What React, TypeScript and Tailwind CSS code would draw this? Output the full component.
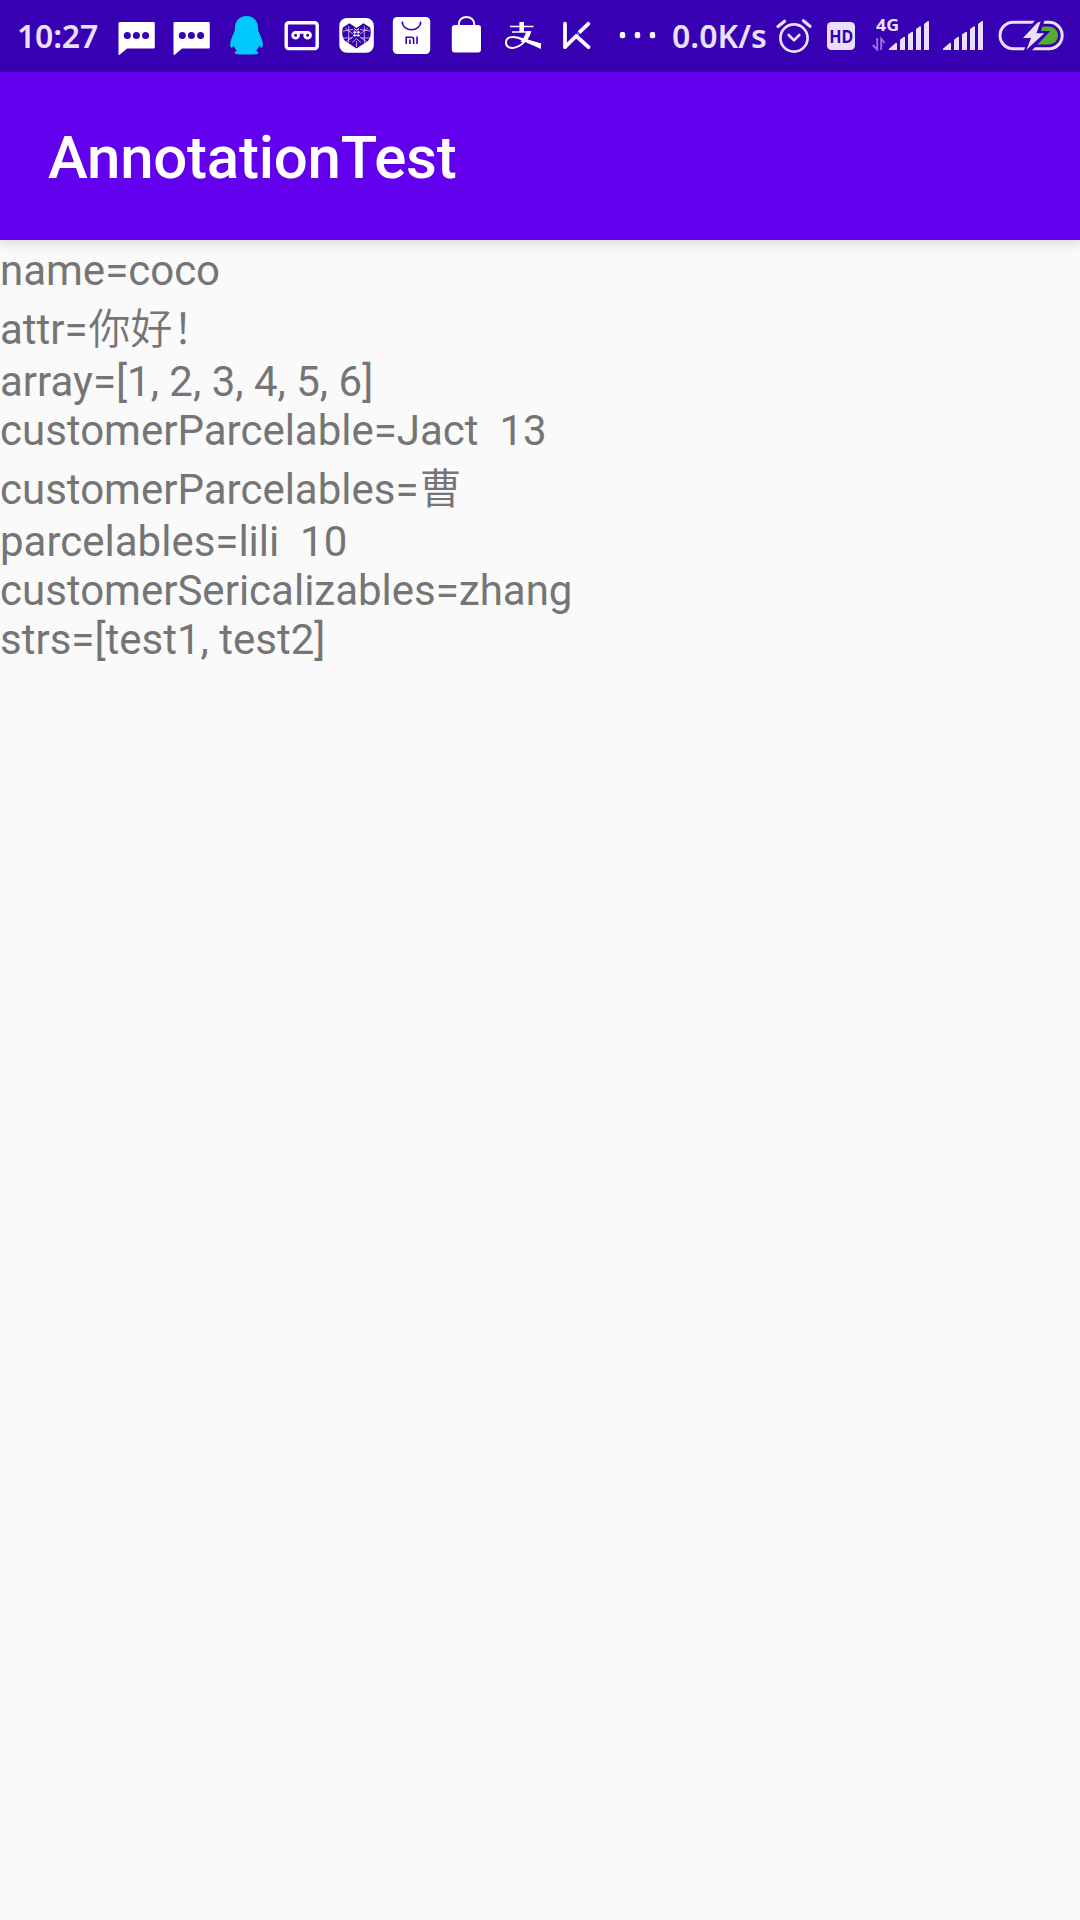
import React from "react";

const TINT = "#ebe0fc";
const BAR = "#3700b3";

function Slot({ x, w, children }: { x: number; w: number; children: React.ReactNode }) {
  return (
    <svg className="block shrink-0" width={w} height={72} viewBox={`${x} 0 ${w} 72`} fill="none">
      {children}
    </svg>
  );
}

function Chat({ x }: { x: number }) {
  return (
    <Slot x={x} w={55}>
      <g transform={`translate(${x - 109} 0)`}>
        <path d="M120 22H153.5Q154.8 22 154.8 23.3V47.2Q154.8 48.5 153.5 48.5H127L120 54.6Q118.5 55.4 118.5 54V23.3Q118.5 22 120 22Z" fill="#fff" />
        <g fill={BAR}>
          <circle cx="127.3" cy="35.5" r="3.5" />
          <circle cx="136.4" cy="35.5" r="3.5" />
          <circle cx="145.6" cy="35.5" r="3.5" />
        </g>
      </g>
    </Slot>
  );
}

function Bars({ x }: { x: number }) {
  return (
    <path
      transform={`translate(${x} 0)`}
      fill={TINT}
      d="M0 50V48.8L6 43.5Q8 42 8 44V50ZM11 50V39.8L14.6 37Q16 36.2 16 38V50ZM19 50V34.6L22.6 32Q24 31.2 24 33V50ZM27 50V29L30.6 26.4Q32 25.6 32 27.4V50ZM35 50V24L38.6 21.2Q40 20.4 40 22V50Z"
    />
  );
}

function StatusBar() {
  return (
    <header className="flex h-[72px] items-center bg-[#3700b3] font-['Noto_Sans',sans-serif] text-[32px] leading-[72px] font-semibold text-[#ebe0fc]">
      <span className="w-[109px] shrink-0 pl-[17px] tracking-[-0.2px] whitespace-nowrap">10:27</span>
      <Chat x={109} />
      <Chat x={164} />
      <Slot x={219} w={55}>
        <path
          fill="#00c8ff"
          d="M246.5 16C253.6 16 258 21 258 27.5C258 31 259.2 33 260.5 36C262.5 40.5 263.5 45 262.4 47.3C261.6 48.4 260 46.6 259.2 45.2C258.6 47.6 257.4 49.4 256 50.7C258 51.6 258.6 52.4 258.2 53.3C257.8 54.4 256 54.4 253.5 54.4H239.5C237 54.4 235.2 54.4 234.8 53.3C234.4 52.4 235 51.6 237 50.7C235.6 49.4 234.4 47.6 233.8 45.2C233 46.6 231.4 48.4 230.6 47.3C229.5 45 230.5 40.5 232.5 36C233.8 33 235 31 235 27.5C235 21 239.4 16 246.5 16Z"
        />
      </Slot>
      <Slot x={274} w={55}>
        <rect x="286.2" y="22.8" width="31" height="25.8" rx="2.5" stroke="#fff" strokeWidth="3.4" />
        <circle cx="295.6" cy="35.3" r="2.9" stroke="#fff" strokeWidth="2.8" />
        <circle cx="307.6" cy="35.3" r="2.9" stroke="#fff" strokeWidth="2.8" />
        <path d="M295.6 32.4H307.6" stroke="#fff" strokeWidth="2.8" />
      </Slot>
      <Slot x={329} w={55}>
        <rect x="339.3" y="18" width="34.5" height="34.7" rx="7.5" fill="#fff" />
        <path
          d="M356.5 48.5L345 41C342.6 38 342 35 342.3 31L342.8 27.5L349.5 23.2L356.5 28L363.5 23.2L370.2 27.5L370.7 31C371 35 370.4 38 368 41Z"
          fill={BAR}
        />
        <g stroke="#fff" strokeOpacity="0.8" strokeWidth="0.8">
          <path d="M348.7 26V43M364.3 26V43M343 31L353 29.5M370 31L360 29.5M343 38H352M370 38H361M345 28L353 34M368 28L360 34M353 37L346 42M360 37L367 42" />
          <path d="M352 42.5L356.5 38.8L361 42.5M356.5 41V47" />
        </g>
        <g stroke="#fff" strokeWidth="1">
          <path d="M354.8 30.5V37M358.2 30.5V37M353 32.2H360M353 35.4H360" />
          <path d="M354 28.5L356.5 30.2L359 28.5" />
        </g>
      </Slot>
      <Slot x={384} w={55}>
        <rect x="392.8" y="17" width="37.4" height="37" rx="4.5" fill="#fff" />
        <path d="M402.3 21.5C402.3 32.4 420.7 32.4 420.7 21.5" stroke={BAR} strokeWidth="1.5" />
        <path d="M406.2 44V37.2H411.5Q413.6 37.2 413.6 39.2V44M409.9 39.4V44M417 36.4V44" stroke={BAR} strokeWidth="1.6" />
      </Slot>
      <Slot x={439} w={55}>
        <rect x="451.8" y="25" width="29.2" height="27.6" rx="3" fill="#fff" />
        <path d="M458.8 26V24.5C458.8 14.4 474.2 14.4 474.2 24.5V26" stroke="#fff" strokeWidth="2" />
      </Slot>
      <Slot x={494} w={56}>
        <path d="M510 26.5H533.5M512 32H529.5" stroke="#fff" strokeWidth="1.7" />
        <path d="M521.7 22V32" stroke="#fff" strokeWidth="4.6" />
        <path d="M530.5 31.2C528.5 37.5 524 43 519 46C514 49 506 48.8 506 42.5C506 37 512 36 518 37.7C525 39.7 530 41.5 541 44.5" stroke="#fff" strokeWidth="2" />
        <path d="M526.4 31.2H531C529.5 36 527 40 523.5 43L520.5 41.5C523.5 38.4 525.3 35 526.4 31.2ZM518 37.2C524 38.8 529 40.2 541 43.5V49C535 46 526 42.6 518 38.8Z" fill="#fff" />
      </Slot>
      <Slot x={550} w={56}>
        <path d="M565 23.7V47.2L576.2 36L588.5 47.2M588.3 23.8L579 32.7" stroke="#fff" strokeWidth="3.8" strokeLinecap="round" strokeLinejoin="round" />
        <path d="M576.3 30.9L581.2 35.6" stroke={BAR} strokeWidth="1.2" />
      </Slot>
      <Slot x={606} w={66}>
        <g fill="#fff">
          <rect x="619.8" y="32" width="5.4" height="6.2" rx="2" />
          <rect x="634.8" y="32" width="5.4" height="6.2" rx="2" />
          <rect x="649.8" y="32" width="5.4" height="6.2" rx="2" />
        </g>
      </Slot>
      <span className="w-[98px] shrink-0 whitespace-nowrap">0.0K/s</span>
      <Slot x={770} w={50}>
        <g stroke={TINT} strokeLinecap="round">
          <circle cx="794" cy="38" r="13.6" strokeWidth="2.7" />
          <path d="M788.7 35L794 40.3L799.3 35" strokeWidth="2.6" strokeLinejoin="round" />
          <path d="M778 26.6L784.6 21.2M810 26.2L803.4 20.8" strokeWidth="3.2" />
        </g>
      </Slot>
      <Slot x={820} w={45}>
        <rect x="827" y="22" width="28" height="28" rx="4.5" fill={TINT} />
        <text x="841.2" y="43" fill={BAR} fontFamily="Noto Sans" fontWeight="700" fontSize="17.5" textAnchor="middle" textLength="24" lengthAdjust="spacingAndGlyphs">HD</text>
      </Slot>
      <Slot x={865} w={70}>
        <text x="876" y="31.3" fill={TINT} fontFamily="Noto Sans" fontWeight="700" fontSize="16.5" textLength="23" lengthAdjust="spacingAndGlyphs">4G</text>
        <path d="M877.2 38V49.5L872.8 45M881.2 50V38.8L884.6 43" stroke="#9a7bdc" strokeWidth="1.8" />
        <Bars x={889} />
      </Slot>
      <Slot x={935} w={55}>
        <Bars x={943} />
      </Slot>
      <Slot x={990} w={90}>
        <rect x="1000" y="22.3" width="62.2" height="26.4" rx="13.2" stroke={TINT} strokeWidth="3" />
        <path d="M1029 26.5H1048C1054 26.5 1058 30.5 1058 35.5C1058 40.5 1054 44.5 1048 44.5H1029Z" fill="#52ae30" />
        <path d="M1037.5 19L1021 39.5H1029L1024.5 52H1029L1048 32H1039.5L1044 19Z" fill={BAR} stroke={BAR} strokeWidth="2" />
        <path d="M1037.3 22.8L1023 38H1031L1026.5 49.8L1044.3 33.3H1036.5L1040.6 21.4Z" fill={TINT} />
      </Slot>
    </header>
  );
}

const lines: { text: string; cjk?: string }[] = [
  { text: "name=coco" },
  { text: "attr=", cjk: "你好！" },
  { text: "array=[1, 2, 3, 4, 5, 6]" },
  { text: "customerParcelable=Jact  13" },
  { text: "customerParcelables=", cjk: "曹" },
  { text: "parcelables=lili  10" },
  { text: "customerSericalizables=zhang" },
  { text: "strs=[test1, test2]" },
];

export default function App() {
  return (
    <div className="flex h-[1920px] w-[1080px] flex-col overflow-hidden bg-[#fafafa]">
      <StatusBar />
      <div className="relative flex h-[168px] shrink-0 items-center bg-[#6200ee] pt-1 pl-12 shadow-[0_3px_12px_rgba(0,0,0,0.15)]">
        <h1 className="font-[Roboto,sans-serif] text-[60px] leading-[70px] font-medium tracking-[-0.25px] text-white">AnnotationTest</h1>
      </div>
      <main className="flex flex-col pt-1.5 font-[Roboto,'Noto_Sans_CJK_SC',sans-serif] text-[42px] leading-[49px] text-[#757575]">
        {lines.map((l) => (
          <p key={l.text} className={l.cjk ? "mt-2.5 mb-[3px] h-[49px] whitespace-pre" : "h-[49px] whitespace-pre"}>
            {l.text}
            {l.cjk && <span className="ml-px font-[350]">{l.cjk}</span>}
          </p>
        ))}
      </main>
    </div>
  );
}
